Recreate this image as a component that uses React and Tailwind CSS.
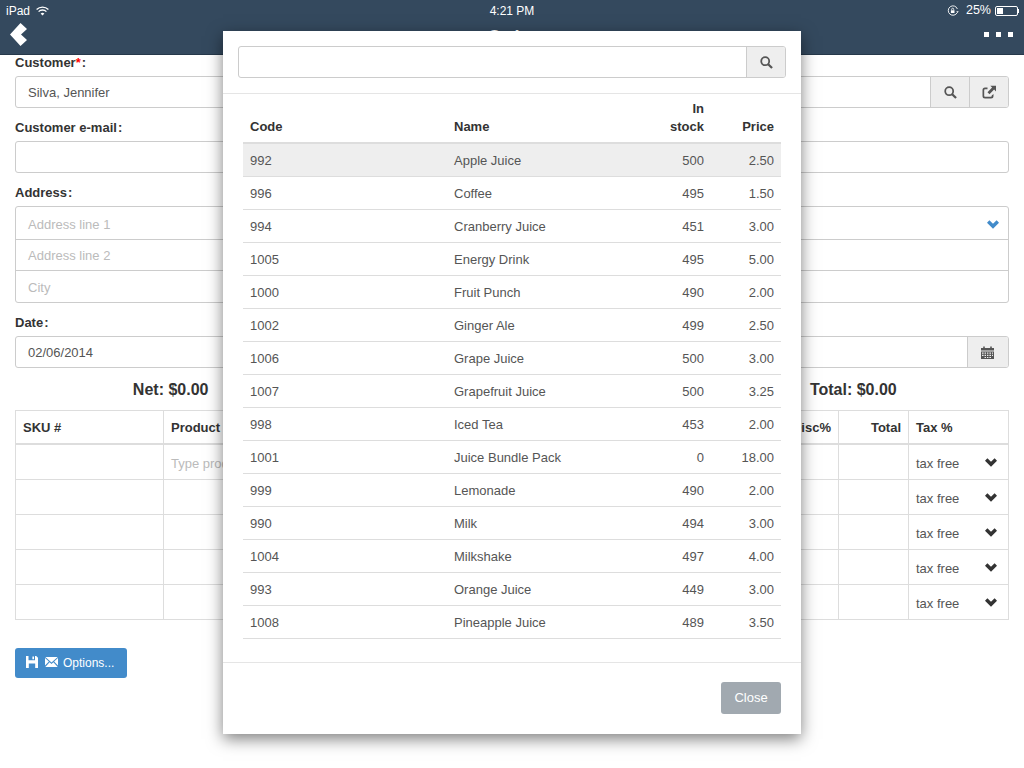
const products = [
  ["992", "Apple Juice", "500", "2.50"],
  ["996", "Coffee", "495", "1.50"],
  ["994", "Cranberry Juice", "451", "3.00"],
  ["1005", "Energy Drink", "495", "5.00"],
  ["1000", "Fruit Punch", "490", "2.00"],
  ["1002", "Ginger Ale", "499", "2.50"],
  ["1006", "Grape Juice", "500", "3.00"],
  ["1007", "Grapefruit Juice", "500", "3.25"],
  ["998", "Iced Tea", "453", "2.00"],
  ["1001", "Juice Bundle Pack", "0", "18.00"],
  ["999", "Lemonade", "490", "2.00"],
  ["990", "Milk", "494", "3.00"],
  ["1004", "Milkshake", "497", "4.00"],
  ["993", "Orange Juice", "449", "3.00"],
  ["1008", "Pineapple Juice", "489", "3.50"],
];

const Search = () => (
  <svg width="13" height="13" viewBox="0 0 14 14" fill="none" stroke="#555" className="block">
    <circle cx="5.6" cy="5.6" r="4.3" strokeWidth="1.9" />
    <path d="M8.8 8.8 L13 13" strokeWidth="2.4" />
  </svg>
);

const Share = () => (
  <svg width="14" height="14" viewBox="0 0 14 14" className="block" fill="#555">
    <path d="M5.5 2.5H3A2.5 2.5 0 0 0 .5 5v6A2.5 2.5 0 0 0 3 13.5h6a2.5 2.5 0 0 0 2.5-2.5V9l-1.8 1.5V11a.8.8 0 0 1-.8.8H3a.8.8 0 0 1-.8-.8V5a.8.8 0 0 1 .8-.8h2.5z" />
    <path d="M8.3 .8H14v5.7l-1.9-1.9-4.6 4.7-2-2 4.6-4.7z" />
  </svg>
);

const Calendar = () => (
  <svg width="13" height="13" viewBox="0 0 13 13" className="mr-[2px] block" fill="#555">
    <path d="M0 2h2.2V.4h1.6V2h5.4V.4h1.6V2H13v2.6H0z" />
    <path fillRule="evenodd" d="M0 5.4h13V13H0zM1 6.6v1.2h1.6V6.6zm2.6 0v1.2h1.4V6.6zm2.4 0v1.2h1.4V6.6zm2.4 0v1.2H10V6.6zm2.6 0v1.2H12V6.6zM1 8.8V10h1.6V8.8zm2.6 0V10h1.4V8.8zm2.4 0V10h1.4V8.8zm2.4 0V10H10V8.8zm2.6 0V10H12V8.8zM3.6 11v1h1.4v-1zm2.4 0v1h1.4v-1zm2.4 0v1H10v-1z" />
  </svg>
);

const ChevronDown = ({ color }) => (
  <svg width="12" height="9" viewBox="0 0 13 10" preserveAspectRatio="none" className="block" fill={color}>
    <path d="M0 3 2.6.4 6.5 4.2 10.4.4 13 3 6.5 9.6z" />
  </svg>
);

const Floppy = () => (
  <svg width="12" height="12" viewBox="0 0 12 12" className="mb-[2px] block" fill="#fff">
    <path fillRule="evenodd" d="M0 0h2.5v4.2h6.5V0h1.2L12 1.8V12H0zM2.8 7.4V12h6.4V7.4zM6.4 .4h1.6v2.8H6.4z" />
  </svg>
);

const Envelope = () => (
  <svg width="13" height="10" viewBox="0 0 13 10" className="mb-[2px] block" fill="#fff">
    <path d="M.3 0h12.4L6.5 5.6z" />
    <path d="M0 1 3.9 4.6 0 8.6zM13 1 9.1 4.6 13 8.6z" />
    <path d="M4.6 5.2 6.5 7l1.9-1.8 4.3 4.8H.3z" />
  </svg>
);

const Wifi = () => (
  <svg width="13" height="10" viewBox="0 0 13 10" className="block" fill="none" stroke="#fff" strokeWidth="1.3">
    <path d="M.6 3.5a8.4 8.4 0 0 1 11.8 0" />
    <path d="M2.6 5.6a5.5 5.5 0 0 1 7.8 0" />
    <path d="M6.5 9.6 4.6 7.6a2.7 2.7 0 0 1 3.8 0z" fill="#fff" stroke="none" />
  </svg>
);

const RotationLock = () => (
  <svg width="12" height="12" viewBox="0 0 12 12" className="block" fill="none" stroke="#fff" strokeWidth="0.9">
    <path d="M10.2 7.6A4.7 4.7 0 1 1 10.4 4" />
    <path d="M9.3 6.3h2.4L10.5 8z" fill="#fff" stroke="none" />
    <rect x="3.9" y="5.3" width="3.6" height="2.7" fill="#fff" stroke="none" />
    <path d="M4.7 5.3V4.2a1 1 0 0 1 2 0v1.1" strokeWidth="0.8" />
  </svg>
);

const Addon = ({ children, width = "w-[39px]" }) => (
  <div className={`flex shrink-0 ${width} items-center justify-center border-l border-[#ccc] bg-[#eee]`}>
    {children}
  </div>
);

const Field = ({ label, required, value, addons, className = "mb-3" }) => (
  <div className={className}>
    <div className="mb-[6px] h-[15px] text-[13px] font-bold leading-[15px] text-[#333]">
      {label}
      {required && <span className="text-[#f00]">*</span>}
      <span className="ml-[1px]">:</span>
    </div>
    <div className="flex h-[32px] overflow-hidden rounded-[3px] border border-[#ccc] bg-white">
      <div className="flex-1 pl-[12px] text-[13px] leading-[32px] text-[#555]">{value}</div>
      {addons}
    </div>
  </div>
);

const tableCols = "grid grid-cols-[148px_462px_80px_78px_55px_70px_1fr]";

const LineRow = ({ first }) => (
  <div className={`${tableCols} h-[35px] border-b border-[#ddd] text-[13px] text-[#555]`}>
    <div className="border-r border-[#ddd]" />
    <div className="border-r border-[#ddd] pl-[7px] pt-[10px] leading-[18px] text-[#bbb]">{first ? "Type product name" : ""}</div>
    <div className="border-r border-[#ddd]" />
    <div className="border-r border-[#ddd]" />
    <div className="border-r border-[#ddd]" />
    <div className="border-r border-[#ddd]" />
    <div className="flex items-start justify-between pl-[7px] pr-[11px]">
      <span className="pt-[10px] leading-[18px]">tax free</span>
      <span className="pt-[13px]">
        <ChevronDown color="#333" />
      </span>
    </div>
  </div>
);

const HeadCell = ({ children, right, last }) => (
  <div className={`${last ? "" : "border-r border-[#ddd]"} px-[7px] pt-[1px] leading-[32px] ${right ? "text-right" : ""}`}>{children}</div>
);

export default function App() {
  return (
    <div className="relative h-[768px] w-[1024px] overflow-hidden bg-white font-['Liberation_Sans',Arial,sans-serif]">
      <header className="h-[55px] border-b border-[#26384a] bg-[#34495e] text-white">
        <div className="relative flex h-[21px] items-center justify-between pl-[6px] pr-[5px]">
          <div className="flex items-center gap-[6px] text-[12px]">
            <span>iPad</span>
            <Wifi />
          </div>
          <div className="absolute left-0 right-0 text-center text-[12px]">4:21 PM</div>
          <div className="flex items-center text-[12.5px]">
            <RotationLock />
            <span className="ml-[7px]">25%</span>
            <div className="ml-[4px] flex h-[10px] w-[23px] items-center rounded-[2px] border border-white p-[1px]">
              <div className="h-full w-[6px] bg-white" />
            </div>
            <div className="h-[4px] w-[1px] bg-white" />
          </div>
        </div>
        <div className="relative flex h-[33px] items-start justify-between pl-[10px] pr-[11px]">
          <svg width="17" height="23" viewBox="0 0 17 23" className="mt-[2px] block" fill="#fff">
            <path d="M0 11.5 10.5 0 17 6 11 11.5 17 17 10.5 23z" />
          </svg>
          <div className="absolute left-0 right-0 top-[6px] text-center text-[18px] font-bold leading-[20px]">Order</div>
          <div className="mt-[11px] flex gap-[7px]">
            <div className="h-[5px] w-[5px] bg-white" />
            <div className="h-[5px] w-[5px] bg-white" />
            <div className="h-[5px] w-[5px] bg-white" />
          </div>
        </div>
      </header>

      <main className="px-[15px]">
        <Field
          label="Customer"
          required
          value="Silva, Jennifer"
          addons={
            <>
              <Addon><Search /></Addon>
              <Addon><Share /></Addon>
            </>
          }
        />
        <Field label="Customer e-mail" value="" />

        <div className="mb-3">
          <div className="mb-[6px] h-[15px] text-[13px] font-bold leading-[15px] text-[#333]">Address<span className="ml-[1px]">:</span></div>
          <div className="h-[97px] rounded-[3px] border border-[#ccc] text-[13px] text-[#bbb]">
            <div className="flex h-[33px] items-center justify-between border-b border-[#ccc] pl-[12px] pr-[9px]">
              <span className="mt-[4px]">Address line 1</span>
              <span className="mt-[2px]"><ChevronDown color="#428bca" /></span>
            </div>
            <div className="flex h-[31px] items-center border-b border-[#ccc] pl-[12px] pt-[2px]">Address line 2</div>
            <div className="flex h-[31px] items-center pl-[12px] pt-[2px]">City</div>
          </div>
        </div>

        <Field
          label="Date"
          value="02/06/2014"
          className=""
          addons={<Addon width="w-[41px]"><Calendar /></Addon>}
        />

        <div className="-mx-[15px] grid h-[42px] grid-cols-3 items-center pt-[2px] text-center text-[16px] font-bold text-[#333]">
          <div>Net: $0.00</div>
          <div>Tax: $0.00</div>
          <div>Total: $0.00</div>
        </div>

        <div className="w-[994px] border-l border-t border-r border-[#ddd]">
          <div className={`${tableCols} h-[34px] border-b-2 border-[#ddd] text-[13px] font-bold text-[#333]`}>
            <HeadCell>SKU #</HeadCell>
            <HeadCell>Product</HeadCell>
            <HeadCell right>Qty</HeadCell>
            <HeadCell right>Price</HeadCell>
            <HeadCell right>Disc%</HeadCell>
            <HeadCell right>Total</HeadCell>
            <HeadCell last>Tax %</HeadCell>
          </div>
          <LineRow first />
          <LineRow />
          <LineRow />
          <LineRow />
          <LineRow />
        </div>

        <button className="mt-[28px] flex h-[30px] w-[112px] items-center rounded-[3px] bg-[#428bca] pl-[11px] text-[12px] text-white">
          <Floppy />
          <span className="ml-[7px]"><Envelope /></span>
          <span className="ml-[5px]">Options...</span>
        </button>
      </main>

      <div className="absolute left-[223px] top-[31px] h-[703px] w-[578px] bg-white shadow-[0_5px_15px_rgba(0,0,0,0.5)]">
        <div className="h-[63px] border-b border-[#e5e5e5] px-[15px] pt-[15px]">
          <div className="flex h-[32px] overflow-hidden rounded-[3px] border border-[#ccc]">
            <div className="flex-1" />
            <Addon><Search /></Addon>
          </div>
        </div>
        <div className="h-[569px] border-b border-[#e5e5e5] px-[20px]">
          <div className="grid h-[50px] grid-cols-[204px_203px_61px_70px] items-end border-b-2 border-[#ddd] pb-[6px] text-[13px] font-bold leading-[18px] text-[#333]">
            <div className="pl-[7px]">Code</div>
            <div className="pl-[7px]">Name</div>
            <div className="pr-[7px] text-right">In<br />stock</div>
            <div className="pr-[7px] text-right">Price</div>
          </div>
          {products.map((p, i) => (
            <div
              key={p[0]}
              className={`grid h-[33px] grid-cols-[204px_203px_61px_70px] items-center border-b border-[#ddd] pt-[2px] text-[13px] text-[#555] ${i === 0 ? "bg-[#eee]" : ""}`}
            >
              <div className="pl-[7px]">{p[0]}</div>
              <div className="pl-[7px]">{p[1]}</div>
              <div className="pr-[7px] text-right">{p[2]}</div>
              <div className="pr-[7px] text-right">{p[3]}</div>
            </div>
          ))}
        </div>
        <div className="flex justify-end pr-[20px] pt-[19px]">
          <button className="h-[32px] w-[60px] rounded-[3px] bg-[#a1a9b0] text-[13px] text-white">Close</button>
        </div>
      </div>
    </div>
  );
}
